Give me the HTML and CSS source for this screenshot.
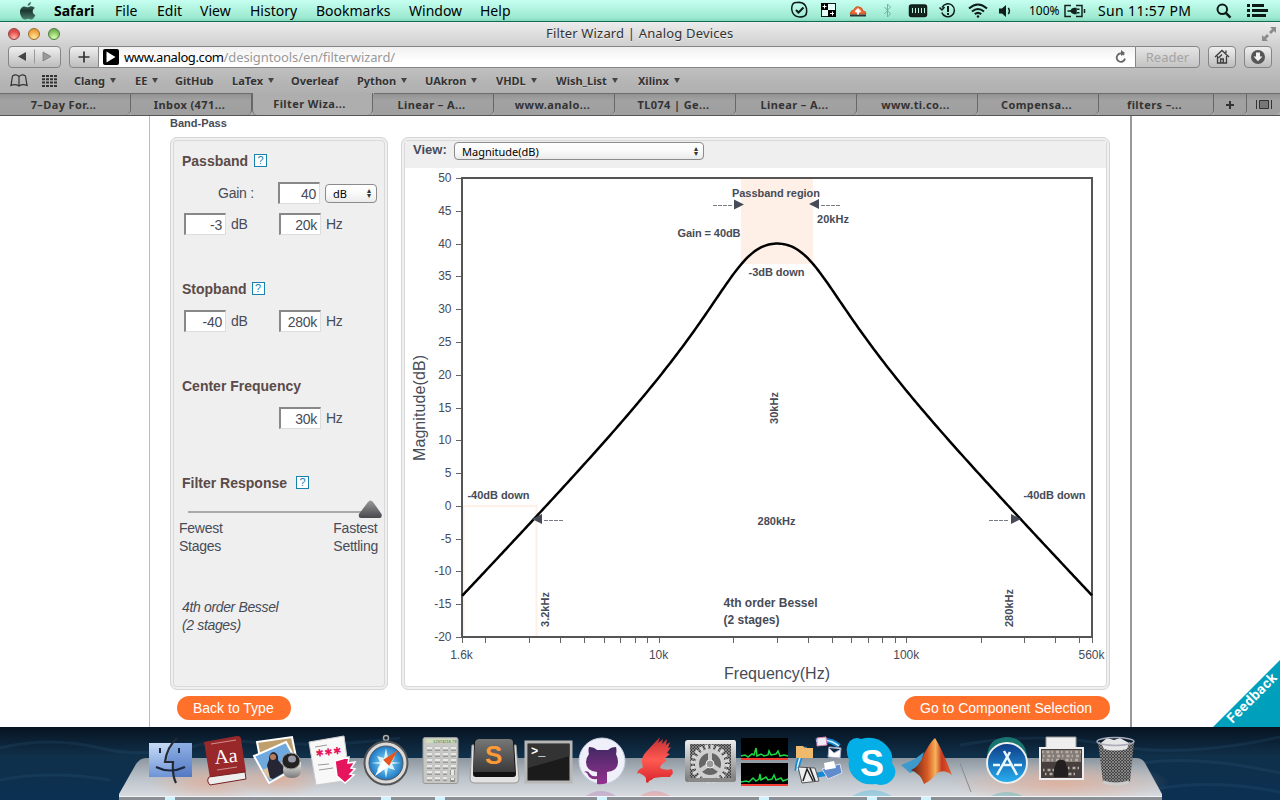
FILE: index.html
```html
<!DOCTYPE html>
<html lang="en">
<head>
<meta charset="utf-8">
<title>Filter Wizard | Analog Devices</title>
<link rel="stylesheet" href="styles.css">
</head>
<body>
<header class="menubar">
  <svg class="apple" width="16" height="18" viewBox="0 0 16 18"><defs><linearGradient id="ap" x2="0" y2="1"><stop stop-color="#4f7d6e"/><stop offset=".5" stop-color="#1c362f"/><stop offset="1" stop-color="#4c8270"/></linearGradient></defs><path fill="url(#ap)" d="M11 0c.2 2-1.500 3.900-3.400 4C7.400 2.200 9 .3 11 0zM8 5.200C9 5 9.800 4.300 11.300 4.300c1.300 0 2.700.7 3.500 1.800-3.100 1.900-2.600 5.900.6 7-.8 2.100-2.300 4.500-3.900 4.500-1.300 0-1.700-.8-3.200-.8s-2 .8-3.200.8C2.600 17.600 0 13.600 0 9.900c0-3.600 2.300-5.500 4.500-5.500C6 4.400 7 5.200 8 5.200z"/></svg>
  <b>Safari</b><span>File</span><span>Edit</span><span>View</span><span>History</span><span>Bookmarks</span><span>Window</span><span>Help</span>
  <svg class="status" width="230" height="22" viewBox="788 0 230 22" fill="none" stroke="#0d1c18" stroke-width="1.500">
    <path d="M792 6q1-4 5-3.500 8-1 9.500 6 1 7-3 8-8 2-11-4-1.500-3-.5-6.500z"/><path d="M796 10l2.500 2.500 5-5" stroke-width="2"/>
    <rect x="821.500" y="3.500" width="14" height="13" fill="#e6fff7" stroke-width="1"/><path fill="#000" stroke="none" d="M821 3h7v7h-7zM828 10h8v7h-8z"/><path stroke="#fff" stroke-width="1" d="M822.500 6.500h4M824.500 4.500v4M830 13.500h4M832.500 11.500v4"/>
    <path d="M850 14q1-4 4-4 1-4 5-3 3 0 4 4 3 0 3 3z" fill="#ef6a32" stroke="#c8572a" stroke-width="1"/><path d="M850 14.500h16v2h-16z" fill="#333" stroke="none"/><path d="M858 14.500V10M855.500 12l2.500-2.500 2.500 2.500" stroke="#fff" stroke-width="2"/>
    <path d="M884.500 7l6 7-3 3V4l3 3-6 7" stroke="#72b19f" stroke-width="1"/>
    <rect x="909.500" y="5" width="17" height="11.500" rx="2" fill="#16241f"/><path stroke="#b9f5e3" stroke-width="1" d="M912.500 8v5M915.500 8v5M918.500 8v5M921.500 8v5M924.500 8v5"/>
    <path d="M942 7.500a6.500 6.500 0 1 1-.2 5M939.500 7.500l2.500 2.500 2.500-3"/><path d="M948 6v6M948 13v2" stroke-width="2"/>
    <g stroke-width="2.100"><path d="M969 8.500q9-8 18 0M972 11.500q6-5 12 0M974.800 14.200q3.200-2.500 6.400 0"/></g><circle cx="978" cy="16.500" r="1.200" fill="#111" stroke="none"/>
    <path d="M999 8.500h3l4-3.500v12l-4-3.500h-3z" fill="#101d19" stroke="none"/><path d="M1008.300 8q2.200 3 0 6"/>
  </svg>
  <span class="pct">100%</span>
  <svg width="22" height="14" viewBox="0 0 22 14" fill="none" stroke="#12241e" stroke-width="1.500"><path d="M7 1.500H1v11h6M12 1.500h6v11h-6M20.500 5v4"/><path d="M3.500 7H7M13 5.300h2.500M13 8.700h2.500"/><path d="M7 7q1-2.500 3-2.500h2v5h-2q-2 0-3-2.500z" fill="#12241e"/></svg>
  <span class="clock">Sun 11:57 PM</span>
  <svg width="16" height="16" viewBox="0 0 16 16" fill="none" stroke="#0c1a16" stroke-width="2"><circle cx="6.300" cy="6.300" r="4.800"/><path d="M9.800 9.800l4.700 4.900" stroke-width="2.500"/></svg>
  <svg width="22" height="14" viewBox="0 0 22 14"><path fill="#0c1a16" d="M0 0h3v3H0zM5 0h12v3H5zM0 5h3v3H0zM5 5h16v3H5zM0 10h3v3H0zM5 10h14v3H5z"/></svg>
</header>

<div class="chrome">
  <div class="titlebar">
    <div class="lights"><i class="red"></i><i class="amber"></i><i class="green"></i></div>
    <div class="title">Filter Wizard | Analog Devices</div>
    <svg width="14" height="14" viewBox="0 0 14 14" fill="#8b8b8b"><path d="M8 0h6v6l-2-2-3 3-2-2 3-3zM0 8l2 2 3-3 2 2-3 3 2 2H0z"/></svg>
  </div>
  <div class="toolbar">
    <div class="btn nav"><svg width="52" height="20" viewBox="0 0 52 20"><path d="M17 5v9L9 9.500z" fill="#444"/><path d="M34 5v9l8-4.500z" fill="#999" stroke="#777" stroke-width=".7"/><path d="M25.500 2.500v14" stroke="#999"/></svg></div>
    <div class="btn add"><svg width="29" height="20" viewBox="0 0 29 20"><path d="M8.500 10h11M14 4.500v11" stroke="#333" stroke-width="1.700"/></svg></div>
    <div class="address">
      <svg width="16" height="16" viewBox="0 0 16 16"><rect width="16" height="16" rx="2"/><path d="M3.500 2.500v11l9-5.500z" fill="#fff"/></svg>
      <span class="url">www.analog.com<em>/designtools/en/filterwizard/</em></span>
      <svg width="12" height="14" viewBox="0 0 12 14" fill="none" stroke="#666" stroke-width="1.800"><path d="M9 4.800A4.200 4.200 0 1 0 10 8.500"/><path d="M6 0v6l4-3z" fill="#666" stroke="none"/></svg>
    </div>
    <div class="btn reader">Reader</div>
    <div class="btn square"><svg width="16" height="16" viewBox="0 0 16 16" fill="none" stroke="#3d3d3d" stroke-width="1.300"><path d="M1 8l7-6.500L15 8M3.500 7v7h9V7M12 4V1.500M8 5.500L4.500 9M6.700 14v-4h2.600v4"/></svg></div>
    <div class="btn square"><svg width="16" height="16" viewBox="0 0 16 16"><circle cx="8" cy="8" r="7" fill="#565656"/><path d="M6 3.500h4v4h2.500L8 12.300 3.500 7.500H6z" fill="#f3f3f3"/></svg></div>
  </div>
  <nav class="bookmarks">
    <svg width="18" height="14" viewBox="0 0 18 14" fill="none" stroke="#333" stroke-width="1.200"><path d="M9 2.500Q6-.3 2.500 2L1 11.500q4-2 8 .5 4-2.500 8-.5L15.500 2Q12-.3 9 2.500zM9 2.500V12"/></svg>
    <svg width="16" height="12" viewBox="0 0 16 12" stroke="#333" stroke-width="2" stroke-dasharray="3 1"><path d="M0 1h15.500M0 4.300h15.500M0 7.600h15.500M0 10.900h15.500"/></svg>
    <span class="drop">Clang</span><span class="drop">EE</span><span>GitHub</span><span class="drop">LaTex</span><span>Overleaf</span><span class="drop">Python</span><span class="drop">UAkron</span><span class="drop">VHDL</span><span class="drop">Wish_List</span><span class="drop">Xilinx</span>
  </nav>
  <div class="tabs">
    <span class="first">7–Day For...</span><span>Inbox (471...</span><span class="active">Filter Wiza...</span><span class="after">Linear – A...</span><span>www.analo...</span><span>TL074 | Ge...</span><span>Linear – A...</span><span>www.ti.co...</span><span>Compensa...</span><span>filters –...</span>
    <span><svg width="8" height="8" viewBox="0 0 8 8"><path d="M0 4h8M4 0v8" stroke="#333" stroke-width="2"/></svg></span>
    <span><svg width="16" height="9" viewBox="0 0 16 9" fill="#777" stroke="#333"><path d="M3.500.5h9v8h-9z"/><path d="M.5 0v9M15.500 0v9"/></svg></span>
  </div>
</div>

<main class="viewport">
  <div class="page">
    <div class="crumb">Band-Pass</div>
    <div class="columns">
      <aside class="panel specs">
        <h2 class="pass">Passband <i class="help">?</i></h2>
        <div class="row"><label class="gain">Gain :</label><span class="input">40</span><span class="select small">dB</span></div>
        <div class="row"><span class="input">-3</span><label>dB</label><span class="input right">20k</span><label>Hz</label></div>
        <h2 class="stop">Stopband <i class="help near">?</i></h2>
        <div class="row"><span class="input">-40</span><label>dB</label><span class="input right">280k</span><label>Hz</label></div>
        <h2 class="center">Center Frequency</h2>
        <div class="row"><span class="input solo">30k</span><label>Hz</label></div>
        <h2 class="center">Filter Response <i class="help far">?</i></h2>
        <svg class="slider" width="208" height="19" viewBox="175 499 208 19"><defs><linearGradient id="kn" x2="0" y2="1"><stop stop-color="#999"/><stop offset="1" stop-color="#48484d"/></linearGradient></defs><path d="M188 512h190" stroke="#aaa" stroke-width="2"/><path d="M368 502q2.500-3 5 0l8.500 12q1 4-2 4h-18.500q-3 0-2-4z" fill="url(#kn)"/></svg>
        <div class="ends"><span>Fewest<br>Stages</span><span>Fastest<br>Settling</span></div>
        <p class="order">4th order Bessel<br>(2 stages)</p>
      </aside>
      <section class="panel graph">
        <div class="view"><b>View:</b><span class="select">Magnitude(dB)</span></div>
        <svg class="plot" width="702" height="519" viewBox="405 168 702 519">
          <path d="M741 178h72v86h-72z" fill="#fff0e7"/>
          <path d="M463 506H536.500V636M463.500 506V636" fill="none" stroke="#fff0e7" stroke-width="2"/>
          <g id="axes"></g>
          <rect x="462" y="178" width="630" height="459" fill="none" stroke="#555" stroke-width="2"/>
          <path id="curve" fill="none" stroke="#000" stroke-width="2.500"/>
          <path d="M734 199.500v10l10-5zM819 199v10l-10-5zM542 514v10l-10-5zM1011 514v10l10-5z" fill="#474b57"/>
          <path d="M713 205.500h19M821 205.500h19M544 520.500h19M989 520.500h19" stroke="#777b84" stroke-dasharray="4 1"/>
          <g class="note">
            <text x="732" y="197" textLength="88">Passband region</text>
            <text x="817" y="223" textLength="32">20kHz</text>
            <text x="677.500" y="237" textLength="63">Gain = 40dB</text>
            <text x="748.500" y="276" textLength="56">-3dB down</text>
            <text x="467.500" y="499" textLength="62">-40dB down</text>
            <text x="1023.500" y="499" textLength="62">-40dB down</text>
            <text x="757.500" y="525" textLength="38">280kHz</text>
            <text transform="translate(778 424)rotate(-90)" textLength="32">30kHz</text>
            <text transform="translate(549 627)rotate(-90)" textLength="35">3.2kHz</text>
            <text transform="translate(1013 627)rotate(-90)" textLength="38">280kHz</text>
            <g class="big"><text x="723.500" y="607" textLength="94">4th order Bessel</text><text x="723.500" y="624" textLength="56">(2 stages)</text></g>
          </g>
          <text class="axis" x="724" y="679" textLength="106">Frequency(Hz)</text>
          <text class="axis" transform="translate(425 461)rotate(-90)" textLength="106">Magnitude(dB)</text>
        </svg>
      </section>
    </div>
    <div class="actions"><a>Back to Type</a><a>Go to Component Selection</a></div>
  </div>
  <svg class="feedback" width="67" height="67" viewBox="0 0 67 67"><path d="M67 0v67H0z" fill="#00a0bc"/><text transform="translate(19.500 64)rotate(-45)" textLength="64">Feedback</text></svg>
</main>

<footer class="dock">
<svg width="1280" height="73" viewBox="0 727 1280 73">
  <defs>
    <linearGradient id="sea" x2="0" y2="1"><stop stop-color="#071421"/><stop offset=".4" stop-color="#10304a"/><stop offset="1" stop-color="#0b3052"/></linearGradient>
    <linearGradient id="shelf" x2="0" y2="1"><stop stop-color="#8c969f"/><stop offset=".5" stop-color="#bac1c8"/><stop offset="1" stop-color="#d9dde2"/></linearGradient>
    <linearGradient id="find" x2="0" y2="1"><stop stop-color="#8db1e4"/><stop offset="1" stop-color="#5579c2"/></linearGradient>
    <linearGradient id="findl" x2="0" y2="1"><stop stop-color="#c7dbf6"/><stop offset="1" stop-color="#6d94d6"/></linearGradient>
    <linearGradient id="steel" x2="0" y2="1"><stop stop-color="#eee"/><stop offset="1" stop-color="#777"/></linearGradient>
    <linearGradient id="dark" x2="0" y2="1"><stop stop-color="#777"/><stop offset="1" stop-color="#3a3a3a"/></linearGradient>
    <linearGradient id="gh" x2="0" y2="1"><stop stop-color="#432864"/><stop offset="1" stop-color="#94328f"/></linearGradient>
    <linearGradient id="redg" x2="0" y2="1"><stop stop-color="#c22e30"/><stop offset=".5" stop-color="#ff5a52"/><stop offset="1" stop-color="#d7242a"/></linearGradient>
    <linearGradient id="mat"><stop stop-color="#5c2018"/><stop offset=".4" stop-color="#d95a24"/><stop offset=".6" stop-color="#f5b35a"/><stop offset=".75" stop-color="#c63820"/><stop offset="1" stop-color="#e5602e"/></linearGradient>
    <linearGradient id="store" x2="0" y2="1"><stop stop-color="#0d3a86"/><stop offset="1" stop-color="#28b0f2"/></linearGradient>
    <radialGradient id="comp"><stop stop-color="#8fe0f5"/><stop offset="1" stop-color="#1c78c6"/></radialGradient>
    <radialGradient id="warm"><stop stop-color="#e6a88d" stop-opacity=".7"/><stop offset="1" stop-color="#e6a88d" stop-opacity="0"/></radialGradient>
    <pattern id="mesh" width="3" height="3" patternUnits="userSpaceOnUse"><path d="M0 0h3v3H0z" fill="#444"/><path d="M0 0l3 3M3 0L0 3" stroke="#999" stroke-width=".7"/></pattern>
  </defs>
  <path d="M0 727h1280v73H0z" fill="url(#sea)"/>
  <g fill="none" stroke="#315f80" stroke-width="3" opacity=".2"><path d="M0 748q50-12 100 0t110-6M240 741q80 8 160-3M960 745q80-14 150 0t170-8M1130 765q60-12 150 8M1150 790q60-12 130 2M0 780q50-10 110 0"/></g>
  <path d="M146 758h990q6 0 9 5l17 31v3H119v-3l17-30q4-6 10-6z" fill="url(#shelf)"/>
  <ellipse cx="210" cy="782" rx="60" ry="20" fill="url(#warm)"/><ellipse cx="280" cy="779" rx="45" ry="18" fill="url(#warm)"/><ellipse cx="1060" cy="783" rx="110" ry="22" fill="url(#warm)"/>
  <path d="M119 797h1043v3H119z" fill="#8b9096"/><path d="M119 796.500h1043" stroke="#f2f4f6"/>
  <g fill="#cdf4ff"><path d="M165 797h10v3h-10zM381 797h10v3h-10zM435 797h10v3h-10zM597 797h10v3h-10zM759 797h10v3h-10zM867 797h10v3h-10zM921 797h10v3h-10z"/></g>
  <g opacity=".25"><path d="M586 796q15-10 30 0z" fill="#a348a0"/><path d="M640 796q15-10 30 0z" fill="#f55"/><path d="M852 796q20-12 40 0z" fill="#0ad"/><path d="M991 796q16-8 32 0z" fill="#0aa"/></g>
  <g><path d="M149 750h43v34h-43z" fill="url(#find)" transform="translate(0 -7)" opacity="0"/><path d="M149 743h43v34h-43z" fill="url(#find)"/><path d="M149 743h24q-6 12-6 19h7v15h-25z" fill="url(#findl)"/><path d="M177 738q-10 9-12 24h8q-1 13 3 21" fill="none" stroke="#252a35" stroke-width="2.200"/><path d="M160 748v5M179 748v5M156 767q14 7 29 0" fill="none" stroke="#1c273d" stroke-width="2"/></g>
  <g><path d="M204 742l33-6q4 0 4 3l5 33-36 6z" fill="#99282b"/><path d="M209 777l36-5 1 7-36 6q-4-4-1-8z" fill="#eee" stroke="#762022"/><text x="215" y="764" transform="rotate(-6 215 764)" class="aa">Aa</text><path d="M211 744l25-4M217 770l20-3" stroke="#d0908e" stroke-width="1"/></g>
  <g><path d="M257 742l35-5 5 25-35 6z" fill="#bfa06c" stroke="#fff" stroke-width="2"/><path d="M254 756l32-14 13 24-30 17z" fill="#6fa9dd" stroke="#fff" stroke-width="2"/><path d="M262 770l31-12 4 7-27 15z" fill="#dec3a2"/><path d="M270 778l-3-13 2-5q0-8 5-8 5 2 4 8l6 7 3 4-14 8z" fill="#252534"/><circle cx="273" cy="757" r="3" fill="#b77c5c"/><path d="M284 762h17v8q0 8-9 8t-9-8z" fill="url(#steel)"/><ellipse cx="291" cy="761" rx="9" ry="8" fill="#222" stroke="#999"/><ellipse cx="292" cy="759" rx="4" ry="3.500" fill="#99a"/></g>
  <g><path d="M309 742l35-6 6 44-34 5z" fill="#f8f8f8" stroke="#ccc"/><text x="316" y="757" transform="rotate(-7 316 757)" class="stars" textLength="26">✱✱✱</text><path d="M315 747l12-2M318 765l11-1M319 770l14-2" stroke="#999"/><path d="M335 761l14-4-1 6 7-1-4 6 4 1-5 5 4 1-9 8-8-7z" fill="#e6145d" stroke="#fff" stroke-width="1.500"/></g>
  <g><circle cx="386" cy="738" r="2.500" fill="none" stroke="#aaa" stroke-width="1.500"/><circle cx="386" cy="763" r="21.500" fill="#dadada" stroke="#555" stroke-width="2"/><circle cx="386" cy="763" r="17" fill="url(#comp)" stroke="#555"/><path d="M386 748l2 10 7-2-3 6 9 1-9 1 3 6-7-2-2 10-2-10-7 2 3-6-9-1 9-1-3-6 7 2z" fill="#d8f2ff"/><path d="M398 750l-9 16-6-6z" fill="#e8561f"/><path d="M375 776l8-16 6 6z" fill="#fff"/></g>
  <g><rect x="423" y="737.500" width="35" height="46" rx="2" fill="#c7c7c3" stroke="#999"/><path d="M426 739h29v4h-29z" fill="#cfddb8"/><path d="M427 748.500h29M427 754.500h29M427 760.500h29M427 766.500h29M427 772.500h20M427 778.500h20M452.500 770v12" stroke="#8b8b8b" stroke-width="4.500" stroke-dasharray="5 3"/><path d="M427 748h29M427 754h29M427 760h29M427 766h29M427 772h20M427 778h20M452.500 770v10" stroke="#e8e8e8" stroke-width="3" stroke-dasharray="5 3"/><text x="433" y="743" class="calc">12374218.73</text></g>
  <g><path d="M472 745h44l3 34q0 4-4 4h-41q-4 0-4-4z" fill="#e2e2e2" stroke="#999"/><path d="M474 742q1-3 4-3h32q3 0 4 3l2 32q0 3-3 3h-37q-3 0-3-3z" fill="#111"/><path d="M475 742q1-3 4-3h30q4 0 4 3l2 30h-42z" fill="url(#dark)"/><text x="485" y="764" class="sub">S</text></g>
  <g><rect x="526" y="742" width="45" height="40" fill="#1b1b1b" stroke="#b7b7b7" stroke-width="3"/><path d="M528 744h42v12l-42 12z" fill="#3d3d3d" opacity=".7"/><text x="531" y="755" class="term">&gt;_</text></g>
  <g><circle cx="602" cy="761" r="23" fill="#eff0fa" stroke="#c9cce0"/><path d="M589 747q5 0 8 3h11q3-3 8-3 1 4 0 7 2 4 2 8 0 9-11 10v11q-5 2-10 1v-5q-7 1-9-4-1-3-4-3 4-2 6 2 2 3 7 2v-4q-11-1-11-10 0-4 3-8-1-3 0-7z" fill="url(#gh)"/></g>
  <path d="M637 774q1-5 5-6l1-1q-3-9 3-15l14-15-2 6 5-4-1 5 5-5-1 6 4-3-2 6 3-1-4 6 3 1-6 5 3 1-6 5-1 3q6 3 12 1l1 4-3 4-8 0-8 1q-2 2-5 3l-1 2-2-1 0-4q-2-3-5-4-2-2-4 0z" fill="url(#redg)"/>
  <g><path d="M688 740h46q2 0 2 3v36q0 3-3 3h-45q-3 0-3-3v-36q0-3 3-3z" fill="url(#steel)"/><path d="M690 744h41v34h-41z" fill="url(#mesh)"/><circle cx="710" cy="764" r="17" fill="none" stroke="#d7d7d7" stroke-width="5" stroke-dasharray="3 2.340"/><circle cx="710" cy="764" r="13" fill="#666" stroke="#d0d0d0" stroke-width="4"/><path d="M710 764V750M710 764l-12 8M710 764l12 8" stroke="#ccc" stroke-width="4"/><circle cx="710" cy="764" r="4" fill="#999" stroke="#eee"/><path d="M688 778h46v4h-46z" fill="#888"/></g>
  <g><path d="M741 738h47v22h-47zM741 763h47v23h-47z"/><path d="M741 756l4-1 3 2 4-3 2 1 2-7 1 8 4-2 3 2 4-1 1-4 2 4 5-1 2-3 2 5 4-1 4 1M741 782l5-1 3 1 4-4 3 3 3-2 1-5 1 6 5-3 2 3 4-1 2-4 2 5 5-2 2 3 5-2" fill="none" stroke="#18d943" stroke-width="1.500"/><path d="M741 759h47M741 785h47" stroke="#f23b32" stroke-width="2"/></g>
  <g><path d="M816 741q14-3 23 5M807 748q-9 8-10 23M812 776l16-3" fill="none" stroke="#1688d4" stroke-width="5"/><path d="M816 741q14-3 23 5M807 748q-9 8-10 23" fill="none" stroke="#d7f3ff" stroke-width="1.500"/><path d="M796 746h7l2 2h8v10h-17z" fill="#efba6c"/><path d="M817 738l9-1 1 8-10 1z" fill="#f0edf8" stroke="#d884ad"/><path d="M829 747l12 1-1 10-12-1zM829 748l5 5 7-4" fill="#fff" stroke="#aac"/><path d="M798 767l17 1 4 13-17 2z" fill="#eee" stroke="#555"/><path d="M803 781l4-12 6 12M810 768l5 13" stroke="#222" stroke-width="1.500" fill="none"/><path d="M822 769l18-5 2 9-14 6z" fill="#608bcd" stroke="#dde"/><path d="M824 763l10-2 2 7-11 2z" fill="#fff"/></g>
  <g><path d="M850 741q5-5 11-2 15-4 25 6 8 8 6 18 7 9 0 17-7 7-16 4-14 2-22-7-7-8-5-17-5-12 1-19z" fill="#04aee6"/><text x="860" y="776" class="skype">S</text></g>
  <g><path d="M901 765l14-6 9-7-5 17-9 4z" fill="#3e99cd"/><path d="M911 770q8-3 13-16 7-13 11-16 6 9 17 37-9-7-16-1-4 6-12 10-3-10-13-14z" fill="url(#mat)"/></g>
  <path d="M960 763l11 29" stroke="#8c8b8c"/>
  <g><path d="M987 755q2-15 14-17 6-2 12 0 12 3 14 17z" fill="#17766f"/><circle cx="1007" cy="763" r="20" fill="url(#store)" stroke="#eee" stroke-width="2"/><path d="M997 775l13-23M1004 751l13 24M993 765h7M1003 765h8M1014 765h8" stroke="#eaf8ff" stroke-width="2.500"/></g>
  <g><path d="M1046 737h30v12h-30z" fill="#eee" stroke="#999"/><path d="M1040 748h43v31h-43z" fill="#463f3d" stroke="#eee" stroke-width="2"/><path d="M1042 750h39v12h-39z" fill="#827b76"/><path d="M1042 752h39M1043 756h37M1042 760h38M1043 770h12M1068 768h13M1045 774h33" stroke="#b6aea6" stroke-width="2.500" stroke-dasharray="1.500 3 3 2"/><path d="M1054 777v-8l3-8q4-3 8 0l3 9v7z" fill="#231f20"/></g>
  <g><path d="M1098 742h36l-4 40q-14 4-27 0z" fill="url(#mesh)"/><path d="M1101 743l6-5 7 2 6-2 9 5-2 6q-12 3-23 0z" fill="#e6e6e6"/><ellipse cx="1115.500" cy="741.500" rx="18.500" ry="4" fill="none" stroke="#aab" stroke-width="1.500"/><path d="M1103 782q13 4 26 0" fill="none" stroke="#ccc" stroke-width="3"/></g>
</svg>
</footer>
<script src="plot.js"></script>
</body>
</html>
```
FILE: styles.css
```css
* { box-sizing: border-box; }
body { margin: 0; width: 1280px; height: 800px; overflow: hidden; font-family: "Liberation Sans", Arial, sans-serif; color: #474b57; }
svg { display: block; }

.menubar, .chrome { font-family: "Lucida Grande", "Noto Sans", sans-serif; white-space: nowrap; }
.menubar { height: 22px; padding-left: 20px; display: grid; align-items: center; color: #000; font-size: 14px; line-height: 20px;
  grid-template-columns: 34px 61px 42px 43px 50px 66px 93px 71px 308px 241px 35px 34px 118px 31px 22px;
  background: linear-gradient(#c6fff0, #9ce9d0 85%, #82d9bb); border-bottom: 1px solid #186b53; }
.menubar .status { align-self: start; }
.pct { font-size: 12px; }
.clock { letter-spacing: .35px; }

.chrome { height: 94px; background: linear-gradient(#ececec, #d0d0d0 25%, #b4b4b4 66%, #a9a9a9); border-bottom: 1px solid #555; }
.titlebar { height: 24px; display: grid; grid-template-columns: 538px 716px 14px; padding-left: 8px; align-items: center; }
.lights { display: flex; gap: 8px; }
.lights i { width: 12px; height: 12px; border-radius: 50%; border: 1px solid #8b4444; }
.red { background: radial-gradient(circle at 50% 85%, #ffb5a7, #e54b48 60%, #c94c4c); }
.lights .amber { border-color: #9b6c2e; background: radial-gradient(circle at 50% 85%, #ffe79b, #f0a540 65%, #cf873a); }
.lights .green { border-color: #4f7b3f; background: radial-gradient(circle at 50% 85%, #dbffae, #7ebe5d 65%, #60994a); }
.title { font-size: 13px; letter-spacing: .16px; line-height: 22px; margin-top: -2px; color: #333; text-shadow: 0 1px #eee; }
.toolbar { height: 22px; display: flex; padding-left: 8px; }
.btn { height: 22px; border: 1px solid #858585; border-radius: 4px; background: linear-gradient(#efefef, #bdbdbd); }
.nav { width: 53px; margin-right: 8px; }
.add { width: 30px; border-radius: 4px 0 0 4px; }
.address { width: 1036px; height: 22px; border: solid #858585; border-width: 1px 0; background: linear-gradient(#f1f1f1, #fff 70%); display: flex; align-items: center; padding: 0 8px 0 4px; gap: 5px; }
.url { flex: 1; font-size: 13px; letter-spacing: -.4px; color: #000; }
.url em { font-style: normal; letter-spacing: -.1px; color: #999; }
.reader { width: 65px; border-radius: 0 4px 4px 0; text-align: center; line-height: 20px; font-size: 13px; color: #a4a4a4; background: linear-gradient(#e5e5e5, #c4c4c4); }
.square { width: 28px; margin-left: 8px; display: grid; place-items: center; }
.bookmarks { height: 25px; padding-left: 10px; display: grid; align-items: center; font-size: 11px; font-weight: 700; color: #333; text-shadow: 0 1px #c9c9c9;
  grid-template-columns: 32px 32px 61px 40px 57px 59px 66px 68px 71px 60px 82px 60px; }
.drop::after { content: ""; display: inline-block; margin-left: 5px; border: solid transparent; border-width: 5px 3.500px 0; border-top-color: #444; vertical-align: 2px; }
.tabs { height: 22px; display: grid; grid-template-columns: 131px repeat(8, 121px) 115px 33px 33px; border-top: 1px solid #6d6d6d; font-size: 11px; letter-spacing: .4px; line-height: 18px; font-weight: 700; color: #333; }
.tabs span { display: grid; place-items: center; padding-right: 3px; background: linear-gradient(#929292, #a2a2a2 30%, #9f9f9f); border-right: 1px solid #686868; border-bottom-right-radius: 5px; box-shadow: 1px 0 #b5b5b5; }
.tabs .active { background: #aeaeae; margin-top: -1px; padding-right: 6px; border-left: 1px solid #686868; border-radius: 0 0 5px 5px; }
.tabs span:nth-last-child(-n+2) { padding: 0; }
.tabs span:last-child { border-right: 0; }

.viewport { position: relative; height: 611px; padding-left: 149px; background: #fff; overflow: hidden; }
.page { width: 983px; height: 611px; padding-left: 20px; border-left: 1px solid #bbb; border-right: 2px solid #999; }
.crumb { height: 21px; font-size: 11px; font-weight: 700; line-height: 15px; }
.columns { display: flex; gap: 13px; }
.panel { height: 553px; padding: 3px; border: 1px solid #d5d5d5; border-radius: 7px; box-shadow: inset 0 0 0 2px #f0f0f0, inset 0 0 0 3px #d9d9d9; }
.specs { width: 218px; background: #efefef; font-size: 14px; letter-spacing: -.25px; }
.specs h2 { display: flex; align-items: center; height: 32px; margin: 0 0 0 8px; font-size: 14px; letter-spacing: 0; color: #5b4a48; }
.specs .pass { margin-top: 4px; }
.specs .stop { margin-top: 33px; }
.specs .center { margin-top: 34px; }
.help { margin: -2px 0 0 6px; width: 13px; height: 13px; border: 1px solid #1781b0; background: #fff; color: #1781b0; font: 11px/11px "Liberation Sans", sans-serif; text-align: center; }
.far { margin-left: 9px; }
.near { margin-left: 5px; }
.row { height: 31px; display: flex; align-items: center; padding-left: 10px; }
.row + .row { height: 32px; }
.input { width: 42px; height: 22px; padding-right: 3px; border: 1px solid #ddd; border-top: 2px solid #888; border-left: 2px solid #888; background: #fff; text-align: right; line-height: 20px; }
.row label { width: 53px; padding-left: 5px; }
.row .gain { width: 94px; padding-left: 34px; }
.solo { margin-left: 95px; }
.select { width: 250px; height: 19px; padding: 0 7px; border: 1px solid #8b8b8b; border-radius: 4px; background: linear-gradient(#fff, #fafafa 50%, #eaeaea); color: #000; font: 11px/17px "Lucida Grande", "Noto Sans", sans-serif; display: flex; justify-content: space-between; }
.select::after { content: "▴\A▾"; white-space: pre; font: 8px/5px "DejaVu Sans"; padding-top: 3px; margin-right: -2px; color: #333; }
.small { width: 52px; margin: 2px 0 0 5px; letter-spacing: 0; }
.ends { display: flex; justify-content: space-between; margin-top: 1px; padding: 0 6px 0 5px; line-height: 18px; }
.order { margin: 43px 0 0 8px; line-height: 18px; font-style: italic; letter-spacing: -.35px; }
.slider { margin-left: 1px; }
.graph { width: 709px; }
.view { height: 27px; display: flex; padding-left: 8px; background: #efefef; }
.view b { width: 41px; font-size: 13px; line-height: 18px; }
.view .select { margin-top: 1px; height: 18px; line-height: 17px; }
.plot { font-size: 12px; fill: #474b57; }
.note { font-size: 11px; font-weight: 700; }
.big { font-size: 12px; }
.axis { font-size: 16px; }
.actions { display: flex; justify-content: space-between; margin-top: 6px; padding: 0 20px 0 7px; }
.actions a { height: 24px; border-radius: 12px; padding: 0 17px 0 16px; background: #ff702b; color: #fff; font-size: 14px; line-height: 24px; }
.actions a:last-child { padding-right: 18px; }
.feedback { position: absolute; right: 0; bottom: 0; fill: #fff; font: 700 14px Roboto, sans-serif; }

.dock { height: 73px; }
.aa { font: 20px "Liberation Serif", serif; fill: #fff; }
.stars { font: 10px "DejaVu Sans", sans-serif; fill: #e6145d; }
.calc { font: 4px "Liberation Sans", sans-serif; fill: #465; }
.sub { font: 700 26px "Liberation Sans", sans-serif; fill: #ff9a38; }
.term { font: 700 12px "Liberation Mono", monospace; fill: #fff; }
.skype { font: 700 36px "Liberation Sans", sans-serif; fill: #fff; }
```
FILE: plot.js
```js
const F_MIN = 1600, F_MAX = 560000, CENTER = 30000, WIDTH = 20000;
const px = f => 462 + 630 * Math.log(f / F_MIN) / Math.log(F_MAX / F_MIN);
const py = db => 178 + (50 - db) * 459 / 70;

// Second-order Bessel prototype mapped to a band-pass.
function magnitude(f) {
  const w = (f / CENTER - CENTER / f) * CENTER / WIDTH;
  return 40 - 10 * Math.log10(1 + 0.618 * w ** 2 + 0.382 * w ** 4);
}

let d = "";
for (let i = 0; i <= 315; i++) {
  const f = F_MIN * Math.pow(F_MAX / F_MIN, i / 315);
  d += (i ? "L" : "M") + px(f).toFixed(2) + " " + py(magnitude(f)).toFixed(2);
}
document.getElementById("curve").setAttribute("d", d);

let marks = "", labels = "";
for (let db = 50; db >= -20; db -= 5) {
  const y = Math.round(py(db)) + 0.5;
  marks += `M456 ${y}h6`;
  labels += `<text x="451.500" y="${y + 3.5}" text-anchor="end">${db}</text>`;
}
const ticks = [F_MIN, F_MAX];
for (const decade of [1000, 10000, 100000])
  for (let n = 1; n < 10; n++) if (n * decade > F_MIN && n * decade < F_MAX) ticks.push(n * decade);
for (const f of ticks) marks += `M${Math.floor(px(f)) + 0.5} 637v6`;
for (const [f, name] of [[F_MIN, "1.6k"], [10000, "10k"], [100000, "100k"], [F_MAX, "560k"]])
  labels += `<text x="${px(f) - 0.5}" y="659" text-anchor="middle">${name}</text>`;
document.getElementById("axes").innerHTML = `<path d="${marks}" stroke="#666"/>${labels}`;
```
